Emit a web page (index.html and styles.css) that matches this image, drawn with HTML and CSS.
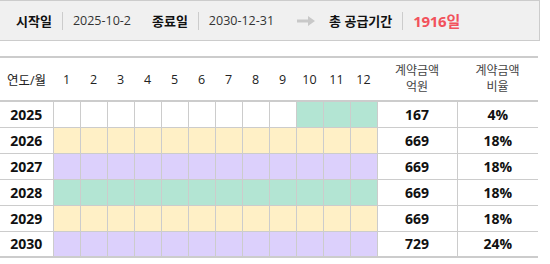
FILE: index.html
```html
<!DOCTYPE html>
<html lang="ko">
<head>
<meta charset="utf-8">
<link rel="stylesheet" href="styles.css">
</head>
<body>
<div class="summary">
  <span class="label">시작일</span><span class="sep"></span><span class="value">2025-10-2</span>
  <span class="label gap">종료일</span><span class="sep"></span><span class="value">2030-12-31</span>
  <svg class="arrow" width="18" height="10" viewBox="0 0 18 10"><path d="M0 3.5H11V0L18 5L11 10V6.5H0Z" fill="#c8c8c8"/></svg>
  <span class="label">총 공급기간</span><span class="sep"></span><span class="total">1916일</span>
</div>
<table class="grid">
  <colgroup>
    <col class="c-year"><col class="c-m"><col class="c-m"><col class="c-m"><col class="c-m"><col class="c-m"><col class="c-m"><col class="c-m"><col class="c-m"><col class="c-m"><col class="c-m"><col class="c-m"><col class="c-m"><col class="c-amt"><col class="c-pct">
  </colgroup>
  <thead>
    <tr>
      <th>연도/월</th><th>1</th><th>2</th><th>3</th><th>4</th><th>5</th><th>6</th><th>7</th><th>8</th><th>9</th><th>10</th><th>11</th><th>12</th>
      <th class="two">계약금액<br>억원</th><th class="two">계약금액<br>비율</th>
    </tr>
  </thead>
  <tbody>
    <tr><td class="y">2025</td><td></td><td></td><td></td><td></td><td></td><td></td><td></td><td></td><td></td><td class="g"></td><td class="g"></td><td class="g"></td><td class="n">167</td><td class="n">4%</td></tr>
    <tr><td class="y">2026</td><td class="o"></td><td class="o"></td><td class="o"></td><td class="o"></td><td class="o"></td><td class="o"></td><td class="o"></td><td class="o"></td><td class="o"></td><td class="o"></td><td class="o"></td><td class="o"></td><td class="n">669</td><td class="n">18%</td></tr>
    <tr><td class="y">2027</td><td class="p"></td><td class="p"></td><td class="p"></td><td class="p"></td><td class="p"></td><td class="p"></td><td class="p"></td><td class="p"></td><td class="p"></td><td class="p"></td><td class="p"></td><td class="p"></td><td class="n">669</td><td class="n">18%</td></tr>
    <tr><td class="y">2028</td><td class="g"></td><td class="g"></td><td class="g"></td><td class="g"></td><td class="g"></td><td class="g"></td><td class="g"></td><td class="g"></td><td class="g"></td><td class="g"></td><td class="g"></td><td class="g"></td><td class="n">669</td><td class="n">18%</td></tr>
    <tr><td class="y">2029</td><td class="o"></td><td class="o"></td><td class="o"></td><td class="o"></td><td class="o"></td><td class="o"></td><td class="o"></td><td class="o"></td><td class="o"></td><td class="o"></td><td class="o"></td><td class="o"></td><td class="n">669</td><td class="n">18%</td></tr>
    <tr><td class="y">2030</td><td class="p"></td><td class="p"></td><td class="p"></td><td class="p"></td><td class="p"></td><td class="p"></td><td class="p"></td><td class="p"></td><td class="p"></td><td class="p"></td><td class="p"></td><td class="p"></td><td class="n">729</td><td class="n">24%</td></tr>
  </tbody>
</table>
</body>
</html>
```
FILE: styles.css
```css
* { box-sizing: border-box; }
body {
  margin: 0;
  background: #fff;
  font-family: "Open Sans", "Noto Sans CJK KR", sans-serif;
  color: #222;
}
.summary {
  width: 540px;
  height: 41px;
  background: #f0f0f0;
  border: 1px solid #cccccc;
  border-left: none;
  display: flex;
  align-items: center;
  padding-left: 16px;
}
.label {
  font-size: 13px;
  font-weight: 700;
  color: #111;
}
.label.gap { margin-left: 21px; }
.sep {
  width: 1px;
  height: 18px;
  background: #cccccc;
  margin: 0 10px;
}
.value {
  font-size: 12.5px;
  color: #333;
}
.arrow { margin: 0 14px 0 23px; }
.total {
  font-size: 15px;
  font-weight: 700;
  color: #f2525c;
  letter-spacing: -0.3px;
}
.grid {
  margin-top: 15px;
  width: 538px;
  border-collapse: collapse;
  table-layout: fixed;
  border-top: 2px solid #cccccc;
  border-bottom: 2px solid #cccccc;
}
.c-year { width: 53px; }
.c-m { width: 27px; }
.c-amt { width: 80px; }
.c-pct { width: 81px; }
th {
  height: 44px;
  font-weight: 400;
  font-size: 12.5px;
  color: #222;
  padding: 0;
  text-align: center;
  border-bottom: 2px solid #cccccc;
}
th.two {
  font-size: 12px;
  line-height: 16px;
  color: #444;
}
td {
  height: 26px;
  padding: 0;
  border: 1px solid #cccccc;
  text-align: center;
  font-size: 14px;
  font-weight: 700;
  color: #111;
}
td:first-child { border-left: none; }
td:last-child { border-right: none; }
tbody tr:first-child td { border-top: none; }
tbody tr:last-child td { border-bottom: none; }
.g { background: #b3e5d3; }
.o { background: #fff0c6; }
.p { background: #dcd0fc; }
```
